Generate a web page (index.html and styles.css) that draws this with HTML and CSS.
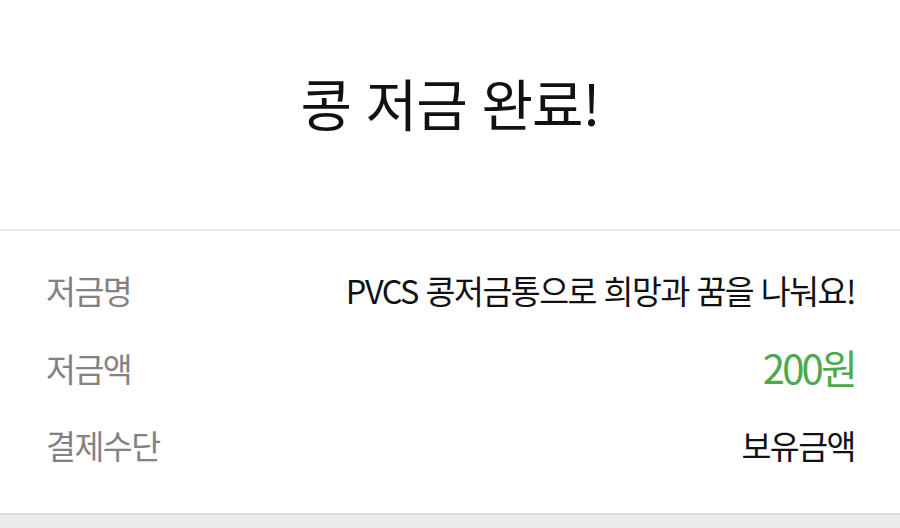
FILE: index.html
```html
<!DOCTYPE html>
<html lang="ko">
<head>
<meta charset="utf-8">
<link rel="stylesheet" href="styles.css">
</head>
<body>
<div class="page">
  <header class="hero">
    <h1 class="title">콩 저금 완료!</h1>
  </header>
  <section class="details">
    <div class="row">
      <span class="label">저금명</span>
      <span class="value">PVCS 콩저금통으로 희망과 꿈을 나눠요!</span>
    </div>
    <div class="row">
      <span class="label">저금액</span>
      <span class="value green">200원</span>
    </div>
    <div class="row">
      <span class="label">결제수단</span>
      <span class="value">보유금액</span>
    </div>
  </section>
  <footer class="bottom"></footer>
</div>
</body>
</html>
```
FILE: styles.css
```css
html, body {
  margin: 0;
  padding: 0;
  background: #ffffff;
}
body {
  font-family: "Noto Sans CJK KR", "Noto Sans", sans-serif;
  width: 900px;
  height: 528px;
  overflow: hidden;
}
.page {
  display: flex;
  flex-direction: column;
  height: 528px;
}
.hero {
  height: 229px;
  display: flex;
  align-items: center;
  justify-content: center;
  border-bottom: 2px solid #eaeaea;
}
.title {
  margin: 0;
  font-size: 56px;
  font-weight: 400;
  color: #111;
  letter-spacing: -1px;
  padding-bottom: 26px;
}
.details {
  flex: 1;
  display: flex;
  flex-direction: column;
  padding: 20px 45px 0 46px;
}
.row {
  display: flex;
  justify-content: space-between;
  align-items: center;
  height: 77.5px;
}
.label {
  font-size: 32.5px;
  color: #828282;
  letter-spacing: -1.5px;
}
.value {
  font-size: 32.5px;
  color: #111;
  letter-spacing: -1.5px;
}
.green {
  color: #4caa4c;
  font-size: 40px;
  letter-spacing: -2.8px;
}
.bottom {
  height: 13px;
  background: #ebebed;
  border-top: 2px solid #dcdcdc;
}
```
